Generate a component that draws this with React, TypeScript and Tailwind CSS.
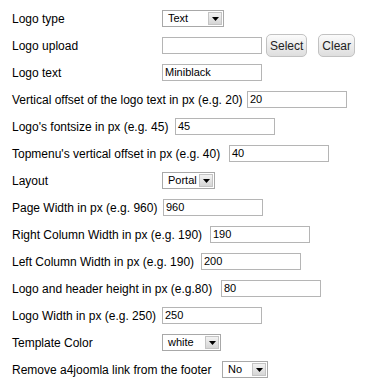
import React from 'react';

// label widths are taken so each control starts where it does in the original form
type Field =
  | { label: string; lw: string; kind: 'select'; value: string; width: string }
  | { label: string; lw: string; kind: 'input'; value: string }
  | { label: string; lw: string; kind: 'upload' };

const fields: Field[] = [
  { label: 'Logo type', lw: 'w-[145px]', kind: 'select', value: 'Text', width: 'w-[62px]' },
  { label: 'Logo upload', lw: 'w-[145px]', kind: 'upload' },
  { label: 'Logo text', lw: 'w-[145px]', kind: 'input', value: 'Miniblack' },
  { label: 'Vertical offset of the logo text in px (e.g. 20)', lw: 'w-[230px]', kind: 'input', value: '20' },
  { label: "Logo's fontsize in px (e.g. 45)", lw: 'w-[158px]', kind: 'input', value: '45' },
  { label: "Topmenu's vertical offset in px (e.g. 40)", lw: 'w-[212px]', kind: 'input', value: '40' },
  { label: 'Layout', lw: 'w-[145px]', kind: 'select', value: 'Portal', width: 'w-[53px]' },
  { label: 'Page Width in px (e.g. 960)', lw: 'w-[146px]', kind: 'input', value: '960' },
  { label: 'Right Column Width in px (e.g. 190)', lw: 'w-[193px]', kind: 'input', value: '190' },
  { label: 'Left Column Width in px (e.g. 190)', lw: 'w-[184px]', kind: 'input', value: '200' },
  { label: 'Logo and header height in px (e.g.80)', lw: 'w-[204px]', kind: 'input', value: '80' },
  { label: 'Logo Width in px (e.g. 250)', lw: 'w-[145px]', kind: 'input', value: '250' },
  { label: 'Template Color', lw: 'w-[145px]', kind: 'select', value: 'white', width: 'w-[59px]' },
  { label: 'Remove a4joomla link from the footer', lw: 'w-[205px]', kind: 'select', value: 'No', width: 'w-[46px]' },
];

function TextBox({ value }: { value: string }) {
  return (
    <div className="w-[100px] h-[17px] border border-[#b5b5b5] bg-white flex items-center pl-[2px] text-[11px] text-black leading-none">
      {value}
    </div>
  );
}

function DropDown({ value, width }: { value: string; width: string }) {
  return (
    <div className={`${width} h-[17px] border border-[#a8a8a8] bg-white flex items-center justify-between text-[11px] text-black leading-none`}>
      <span className="pl-[5px]">{value}</span>
      <span className="h-full w-[16px] p-[1px]">
        <span className="flex h-full w-full items-center justify-center border border-[#c4c4c4] bg-gradient-to-b from-[#f2f2f2] to-[#d6d6d6]">
          <svg width="7" height="4" viewBox="0 0 7 4">
            <path d="M0 0h7L3.5 4z" fill="#000" />
          </svg>
        </span>
      </span>
    </div>
  );
}

function Button({ children }: { children: React.ReactNode }) {
  return (
    <div className="h-[23px] px-[3px] flex items-center rounded-[5px] border border-[#c2c2c2] bg-gradient-to-b from-[#fbfbfb] to-[#dedede] text-[12px] text-[#222]">
      {children}
    </div>
  );
}

export default function App() {
  return (
    <div
      className="w-[376px] h-[391px] bg-white pl-[12px] pt-[5px] text-[12px] text-black"
      style={{ fontFamily: '"Liberation Sans", Arial, sans-serif' }}
    >
      {fields.map((f) => (
        <div key={f.label} className="h-[27px] flex items-center gap-[5px]">
          <span className={`${f.lw} shrink-0 whitespace-nowrap`}>{f.label}</span>
          {f.kind === 'select' && <DropDown value={f.value} width={f.width} />}
          {f.kind === 'input' && <TextBox value={f.value} />}
          {f.kind === 'upload' && (
            <div className="flex items-center">
              <TextBox value="" />
              <div className="ml-[4px]">
                <Button>Select</Button>
              </div>
              <div className="ml-[11px]">
                <Button>Clear</Button>
              </div>
            </div>
          )}
        </div>
      ))}
    </div>
  );
}
